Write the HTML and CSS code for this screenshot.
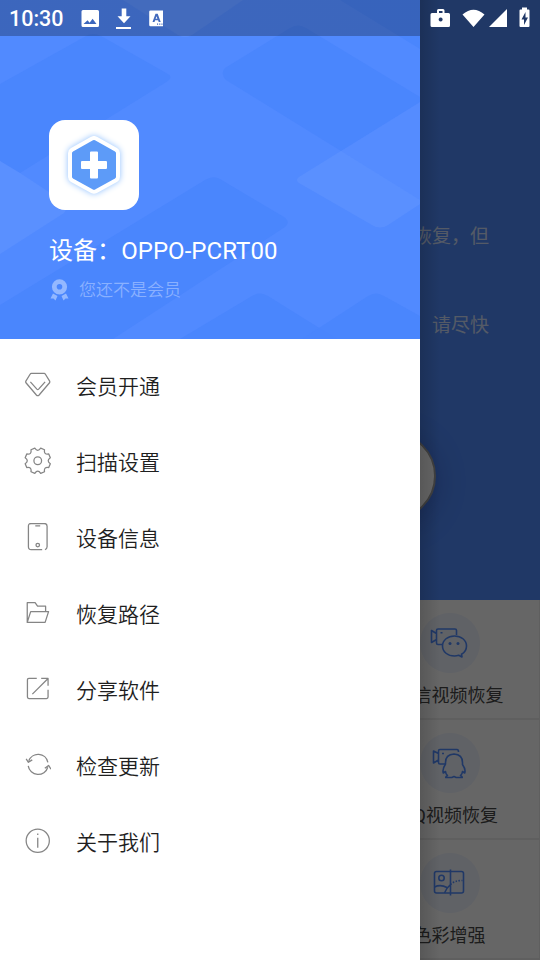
FILE: index.html
```
<!DOCTYPE html>
<html lang="zh-CN">
<head>
    <meta charset="utf-8">
    <title>视频恢复</title>
    <link rel="stylesheet" href="styles.css">
</head>
<body>
    <div class="screen">
        <div class="drawer">
            <div class="profile">
                <svg class="pattern" width="420" height="339" viewBox="0 0 420 339">
                    <g class="dark">
                        <path d="M0 84L86 36Q93 32 101 36L168 74Q173 77 168 81L20 173L0 161Z"/>
                        <path d="M0 305L205 180Q213 175 220 179L284 217Q291 222 285 227L113 339H0Z"/>
                        <path d="M225 68L290 28Q298 23 306 28L420 97V102L341 151L226 80Q220 74 225 68Z"/>
                        <path d="M340 0H420V49Z"/>
                        <path d="M180 339L252 296Q260 291 268 296L337 339Z"/>
                        <path d="M302 339L368 296Q376 291 384 296L420 316V339Z"/>
                    </g>
                    <g class="light">
                        <path d="M0 161L20 173L64 202Q69 207 64 213L0 254Z"/>
                        <path d="M123 0H243L192 35Q185 39 178 35Z"/>
                        <path d="M299 177L341 151L420 200V204L388 225Q380 230 372 225L299 183Q295 180 299 177Z"/>
                    </g>
                    <path class="faint" d="M341 151L420 102V200Z"/>
                </svg>
                <div class="app-icon">
                    <svg width="90" height="90" viewBox="0 0 90 90">
                        <path class="hexagon" d="M43 18.500Q45 17.500 47 18.500L67 29.800Q69 31 69 33V57Q69 59 67 60.200L47 71.200Q45 72.200 43 71.200L23 60.200Q21 59 21 57V33Q21 31 23 29.800Z"/>
                        <path fill="#fff" d="M42 31.500h6a1 1 0 0 1 1 1v8.500h8a1 1 0 0 1 1 1v6a1 1 0 0 1-1 1h-8v8.500a1 1 0 0 1-1 1h-6a1 1 0 0 1-1-1v-8.500h-8a1 1 0 0 1-1-1v-6a1 1 0 0 1 1-1h8v-8.500a1 1 0 0 1 1-1z"/>
                    </svg>
                </div>
                <div class="device">设备：OPPO-PCRT00</div>
                <div class="member">
                    <svg width="20" height="22" viewBox="0 0 20 22">
                        <circle cx="10.500" cy="7.800" r="5.200" fill="none" stroke="#94b8ff" stroke-width="4.800"/>
                        <path fill="#94b8ff" d="M4 14.500L8.500 17L6.500 21.500L4.500 19.500L1.500 19.500Z M17 14.500L12.500 17L14.500 21.500L16.500 19.500L19.500 19.500Z"/>
                    </svg>
                    <span>您还不是会员</span>
                </div>
            </div>

            <div class="menu">
                <div class="menu-item">
                    <svg class="icon" viewBox="0 0 28 28"><path d="M7.500 2.500h13q.8 0 1.300.8l4.300 7q.5.900-.1 1.700L15.400 24.400q-1.400 1.500-2.800 0L2 12q-.6-.8-.1-1.700l4.300-7q.5-.8 1.300-.8zM6.500 11l6.600 7.500q.9.900 1.800 0l6.600-7.500"/></svg>
                    <span>会员开通</span>
                </div>
                <div class="menu-item">
                    <svg class="icon" viewBox="0 0 28 28"><path d="M11 1.200Q14 5.500 17 1.200L20.900 2.800Q20 8 25.200 7.100L26.800 11Q22.500 14 26.800 17L25.200 20.900Q20 20 20.900 25.200L17 26.800Q14 22.500 11 26.800L7.100 25.200Q8 20 2.800 20.900L1.200 17Q5.500 14 1.200 11L2.800 7.100Q8 8 7.100 2.800Z"/><circle cx="14" cy="14" r="3.900"/></svg>
                    <span>扫描设置</span>
                </div>
                <div class="menu-item">
                    <svg class="icon" viewBox="0 0 28 28"><path d="M18.500 27H7.300q-2.800 0-2.800-2.800V3Q4.500.5 7.300.5h13.400q2.800 0 2.800 2.800v20.900q0 2.300-2.200 2.800M11.500 3h5"/><circle cx="14" cy="22.500" r="1.800"/></svg>
                    <span>设备信息</span>
                </div>
                <div class="menu-item">
                    <svg class="icon" viewBox="0 0 28 28"><path d="M3.300 23.800V3.800h8l2.500 3.500H22v5.500M3.300 23.800l3.500-11H25l-3.500 11z"/></svg>
                    <span>恢复路径</span>
                </div>
                <div class="menu-item">
                    <svg class="icon" viewBox="0 0 28 28"><path d="M13 3.500H5q-1.500 0-1.500 1.500v17.500q0 1.500 1.500 1.500h18q1.500 0 1.500-1.500V15M8.500 19.500l16-16M17.500 3.500h7V11"/></svg>
                    <span>分享软件</span>
                </div>
                <div class="menu-item">
                    <svg class="icon" viewBox="0 0 28 28"><path d="M4.800 10A10.200 10.200 0 0 1 24.300 11.500M24.200 16.500A10.200 10.200 0 0 1 4.300 15.200M2.200 8l2.300 3.500 3.900-2.500M21.200 17.500l3.800-2.800 2.500 3.800"/></svg>
                    <span>检查更新</span>
                </div>
                <div class="menu-item">
                    <svg class="icon" viewBox="0 0 28 28"><circle cx="14" cy="14" r="11.800"/><path d="M14 11v10M14 6.700v1.500"/></svg>
                    <span>关于我们</span>
                </div>
            </div>
        </div>

        <div class="page">
            <div class="banner">
                <p class="tip">恢复，但</p>
                <p class="tip second">请尽快</p>
                <div class="scan-button"></div>
            </div>
            <div class="features">
                <div class="feature">
                    <div class="bubble">
                        <svg class="feature-icon" viewBox="0 0 40 40"><path d="M13 21.500H8q-1.500 0-1.500-1.500V7.500Q6.500 6 8 6h17q1.500 0 1.500 1.500V12M6.500 10.500L1.500 7.500v12l5-3M10.500 9.700h2"/><path d="M31.500 31.300q5-2.800 5-8.300c0-6-5.400-10-12-10s-12 4-12 10 5.400 10 12 10q2.200 0 4.200-.7l3.300 1.700z"/><circle class="dot" cx="20" cy="20.500" r="1.500"/><circle class="dot" cx="28" cy="20.500" r="1.500"/></svg>
                    </div>
                    <span>微信视频恢复</span>
                </div>
                <div class="feature">
                    <div class="bubble">
                        <svg class="feature-icon" viewBox="0 0 40 40"><path d="M15 21H10q-1.500 0-1.500-1.500V8q0-1.500 1.500-1.500h17Q28.500 6.500 28.500 9M8.500 10.500L3.500 8v12l5-3M12 10.500h2"/><path d="M15.500 21V19.500q0-8 8.500-8.500 8.500.5 8.500 8.500v2q3.500 5 2.200 8.500l-2.200-1.500q-.2 2.500-2 4 2 1 1.700 2h-6l-2.200-1-2.200 1h-6q-.3-1 1.700-2-1.800-1.500-2-4L13.300 30q-1.300-3.500 2.200-9z"/></svg>
                    </div>
                    <span>QQ视频恢复</span>
                </div>
                <div class="feature">
                    <div class="bubble">
                        <svg class="feature-icon" viewBox="0 0 40 40"><rect x="4.500" y="8.500" width="29" height="21.500" rx="2"/><path d="M20.500 6.500v26M4.500 24q6-3 12.500.5M14.500 30Q16.500 25 20.500 21.500"/><circle cx="11.500" cy="15" r="2.700"/><path stroke-dasharray="1.500 1.500" d="M20.500 21.500q4-4 12-4"/></svg>
                    </div>
                    <span>色彩增强</span>
                </div>
            </div>
        </div>

        <div class="status-bar">
            <span class="time">10:30</span>
            <svg class="notices" width="84" height="24" viewBox="0 0 84 24" fill="#fff">
                <path fill-rule="evenodd" d="M4 4h14.500q1.500 0 1.500 1.500v14q0 1.500-1.500 1.500H4q-1.500 0-1.500-1.500v-14Q2.500 4 4 4zM4.500 18h13l-3.900-5.200-3 3.900-2-2.500z"/>
                <path d="M42.700 2.500h4.600v7.700h4.200l-6.500 7-6.500-7h4.200zM37 21h15v2H37z"/>
                <path fill-rule="evenodd" d="M71.500 4.500h12q1.200 0 1.200 1.200v13.100q0 1.500-1.200 1.500h-12q-1.300 0-1.300-1.500V5.700q0-1.200 1.300-1.200zM76.500 7.800L73.500 16h2l.6-1.800h3l.6 1.800h2l-3-8.200zm1 2.400l.9 2.600h-1.800zM78 17.500v1.200h1.100v-1.200zm2.200 0v1.200h1.100v-1.200zm2.200 0v1.200h1.100v-1.200z"/>
            </svg>
            <svg class="system" width="104" height="24" viewBox="0 0 104 24" fill="#fff">
                <path fill-rule="evenodd" d="M8 7V4.500Q8 3 9.500 3H14q1.500 0 1.500 1.500V7h4Q21 7 21 8.500v11q0 1.500-1.500 1.500H3q-1.500 0-1.500-1.500v-11Q1.500 7 3 7zm2 0h3.500V5H10zm1.600 4.500a2 2 0 1 0 .1 0z"/>
                <path d="M33.500 8.500q11-9.500 22 0L44.500 21zM60 21L78 3V21z"/>
                <path fill-rule="evenodd" d="M91.500 3.500H93V1.500h5v2h1.500q1 0 1 1v15.500q0 1-1 1h-8q-1 0-1-1V4.500q0-1 1-1zM96.500 6L92.500 13.500h2.500V19l4-7.500h-2.500z"/>
            </svg>
        </div>
    </div>
</body>
</html>
```
FILE: styles.css
```
* {
    box-sizing: border-box;
}

body {
    margin: 0;
    font-family: Roboto, "Noto Sans CJK SC", sans-serif;
}

.screen {
    position: relative;
    display: flex;
    width: 540px;
    height: 960px;
    overflow: hidden;
}

.drawer {
    width: 420px;
    background-color: #fff;
}

/* drawer header */
.profile {
    position: relative;
    height: 339px;
    padding: 120px 49px 0;
    background-color: #518aff;
    color: #fff;
}

.pattern {
    position: absolute;
    top: 0;
    left: 0;
}

.pattern .dark {
    fill: #4985fd;
    fill-opacity: 0.8;
}

.pattern .light {
    fill: #fff;
    fill-opacity: 0.055;
}

.pattern .faint {
    fill: #fff;
    fill-opacity: 0.025;
}

.app-icon {
    position: relative;
    width: 90px;
    height: 90px;
    border-radius: 16px;
    background-color: #fff;
}

.hexagon {
    fill: #5d9bf8;
    stroke: #fff;
    stroke-width: 4;
    stroke-linejoin: round;
    filter: drop-shadow(0 0 3px #8fc0ff);
}

.device {
    position: relative;
    margin-top: 23px;
    font-size: 24px;
    line-height: 36px;
    letter-spacing: 0.05px;
}

.member {
    position: relative;
    display: flex;
    align-items: center;
    gap: 10px;
    margin-top: 8px;
    font-size: 17px;
    line-height: 26px;
    color: #8ab1ff;
    font-weight: 350;
}

.menu {
    padding-top: 8px;
}

.menu-item {
    display: flex;
    align-items: center;
    gap: 25px;
    height: 76px;
    padding-left: 23.5px;
    font-size: 21px;
    font-weight: 350;
    color: #1f1f1f;
}

.menu-item span {
    margin-top: -1px;
}

.icon {
    width: 27.5px;
    height: 27.5px;
    fill: none;
    stroke: #858585;
    stroke-width: 1.3;
    stroke-linejoin: round;
}

/* page behind the drawer */
.page {
    position: relative;
    width: 120px;
    overflow: hidden;
    background-color: #fff;
}

.page::after {
    content: "";
    position: absolute;
    top: 0;
    right: 0;
    bottom: 0;
    left: 0;
    background: linear-gradient(to right, rgba(0, 0, 0, 0.14), transparent 20px), rgba(0, 0, 0, 0.6);
}

.banner {
    position: relative;
    height: 600px;
    padding: 223px 51px 0 0;
    background-color: #508cff;
    overflow: hidden;
}

.tip {
    display: flex;
    justify-content: flex-end;
    margin: 0;
    font-size: 19px;
    line-height: 28px;
    white-space: nowrap;
    color: rgba(255, 255, 255, 0.75);
}

.second {
    margin-top: 61px;
}

.scan-button {
    position: absolute;
    top: 432px;
    right: 104px;
    width: 88px;
    height: 88px;
    border: 2px solid #a0a0a0;
    border-radius: 50%;
    background-color: #fff;
    box-shadow: 0 6px 30px rgba(0, 0, 80, 0.25);
}

.features {
    display: flex;
    flex-direction: column;
    align-items: flex-end;
}

.feature {
    display: flex;
    flex-direction: column;
    align-items: center;
    width: 180px;
    height: 120px;
    padding-top: 13px;
    border-right: 1px solid #eee;
    border-bottom: 2px solid #eee;
    font-size: 18px;
    line-height: 26px;
    color: #484848;
}

.feature span {
    margin-top: 10px;
}

.bubble {
    display: flex;
    align-items: center;
    justify-content: center;
    width: 60px;
    height: 60px;
    border-radius: 50%;
    background-color: #eff4ff;
}

.feature-icon {
    width: 40px;
    height: 40px;
    fill: none;
    stroke: #508cff;
    stroke-width: 1.6;
    stroke-linejoin: round;
}

.feature-icon .dot {
    fill: #508cff;
    stroke: none;
}

/* system status bar */
.status-bar {
    position: absolute;
    top: 0;
    left: 0;
    display: flex;
    align-items: center;
    width: 540px;
    height: 36px;
    padding: 0 7px 0 9px;
    background: linear-gradient(rgba(0, 0, 0, 0.26), rgba(0, 0, 0, 0.26)) no-repeat 0 0 / 420px 36px;
    color: #fff;
}

.time {
    width: 70px;
    padding-top: 1px;
    font-size: 21.5px;
    font-weight: 500;
}

.system {
    margin-left: auto;
}
```
